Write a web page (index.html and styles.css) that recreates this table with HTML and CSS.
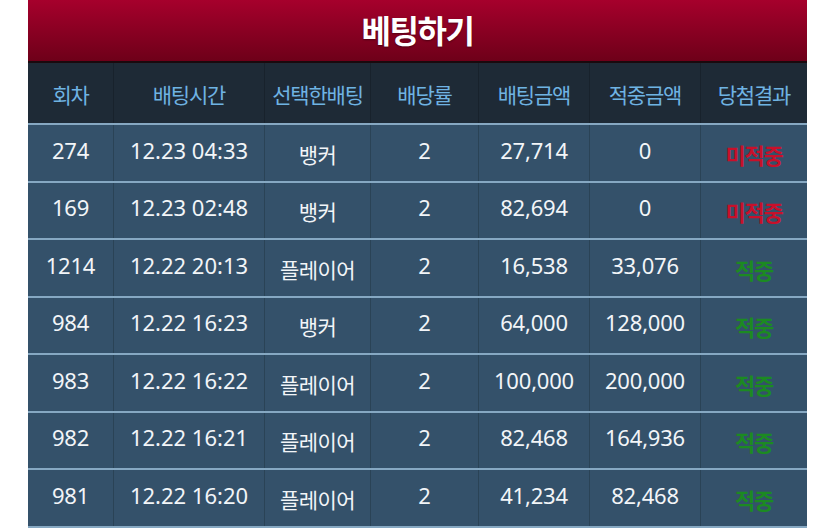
FILE: index.html
```html
<!DOCTYPE html>
<html lang="ko">
<head>
<meta charset="utf-8">
<link rel="stylesheet" href="styles.css">
</head>
<body>
<div class="panel">
  <div class="title">베팅하기</div>
  <div class="grid head">
    <div>회차</div><div>배팅시간</div><div>선택한배팅</div><div>배당률</div><div>배팅금액</div><div>적중금액</div><div>당첨결과</div>
  </div>
  <div class="grid row"><div>274</div><div class="time">12.23 04:33</div><div class="ko">뱅커</div><div>2</div><div>27,714</div><div>0</div><div class="res lose">미적중</div></div>
  <div class="grid row"><div>169</div><div class="time">12.23 02:48</div><div class="ko">뱅커</div><div>2</div><div>82,694</div><div>0</div><div class="res lose">미적중</div></div>
  <div class="grid row"><div>1214</div><div class="time">12.22 20:13</div><div class="ko">플레이어</div><div>2</div><div>16,538</div><div>33,076</div><div class="res win">적중</div></div>
  <div class="grid row"><div>984</div><div class="time">12.22 16:23</div><div class="ko">뱅커</div><div>2</div><div>64,000</div><div>128,000</div><div class="res win">적중</div></div>
  <div class="grid row"><div>983</div><div class="time">12.22 16:22</div><div class="ko">플레이어</div><div>2</div><div>100,000</div><div>200,000</div><div class="res win">적중</div></div>
  <div class="grid row"><div>982</div><div class="time">12.22 16:21</div><div class="ko">플레이어</div><div>2</div><div>82,468</div><div>164,936</div><div class="res win">적중</div></div>
  <div class="grid row"><div>981</div><div class="time">12.22 16:20</div><div class="ko">플레이어</div><div>2</div><div>41,234</div><div>82,468</div><div class="res win">적중</div></div>
</div>
</body>
</html>
```
FILE: styles.css
```css
html, body {
  margin: 0;
  padding: 0;
  background: #ffffff;
}
body {
  font-family: "Noto Sans", "Noto Sans CJK KR", sans-serif;
  height: 529px;
  overflow: hidden;
}
.panel {
  width: 779px;
  margin-left: 28px;
  background: #34516a;
}
.title {
  height: 63px;
  background: linear-gradient(#a6002c, #6e0019);
  border-bottom: 2px solid #1a0a0e;
  color: #ffffff;
  font-family: "Noto Sans CJK KR", sans-serif;
  font-weight: 700;
  font-size: 32px;
  letter-spacing: -1.5px;
  display: flex;
  align-items: center;
  justify-content: center;
  padding-bottom: 4px;
  box-sizing: border-box;
  text-shadow: 0 1px 2px rgba(0,0,0,0.4);
}
.grid {
  display: grid;
  grid-template-columns: 85px 151px 106px 108px 111px 111px 107px;
}
.grid > div {
  display: flex;
  align-items: center;
  justify-content: center;
  border-left: 1px solid #2a4356;
  white-space: nowrap;
}
.grid > div:first-child {
  border-left: none;
}
.head {
  height: 60px;
  background: #1e2a36;
  color: #6fb3e3;
  font-family: "Noto Sans CJK KR", sans-serif;
  font-size: 21px;
  letter-spacing: -1.2px;
}
.head > div {
  border-left: 1px solid #18222c;
  padding-top: 2px;
}
.row {
  height: 55.5px;
  border-top: 2px solid #86a8c2;
  color: #f2f5f8;
  font-size: 22px;
  letter-spacing: -0.2px;
}
.row > div {
  padding-bottom: 6px;
}
.row:last-child {
  border-bottom: 2px solid #86a8c2;
}
.row > .time {
  letter-spacing: 0;
}
.row > .ko {
  font-family: "Noto Sans CJK KR", sans-serif;
  font-size: 21px;
  letter-spacing: -0.6px;
  padding-top: 2px;
  padding-bottom: 0;
}
.row > .res {
  font-family: "Noto Sans CJK KR", sans-serif;
  font-weight: 700;
  font-size: 22px;
  padding-top: 2px;
  padding-bottom: 0;
  letter-spacing: -1.2px;
}
.lose { color: #c8102a; }
.win { color: #1c8a22; }
```
